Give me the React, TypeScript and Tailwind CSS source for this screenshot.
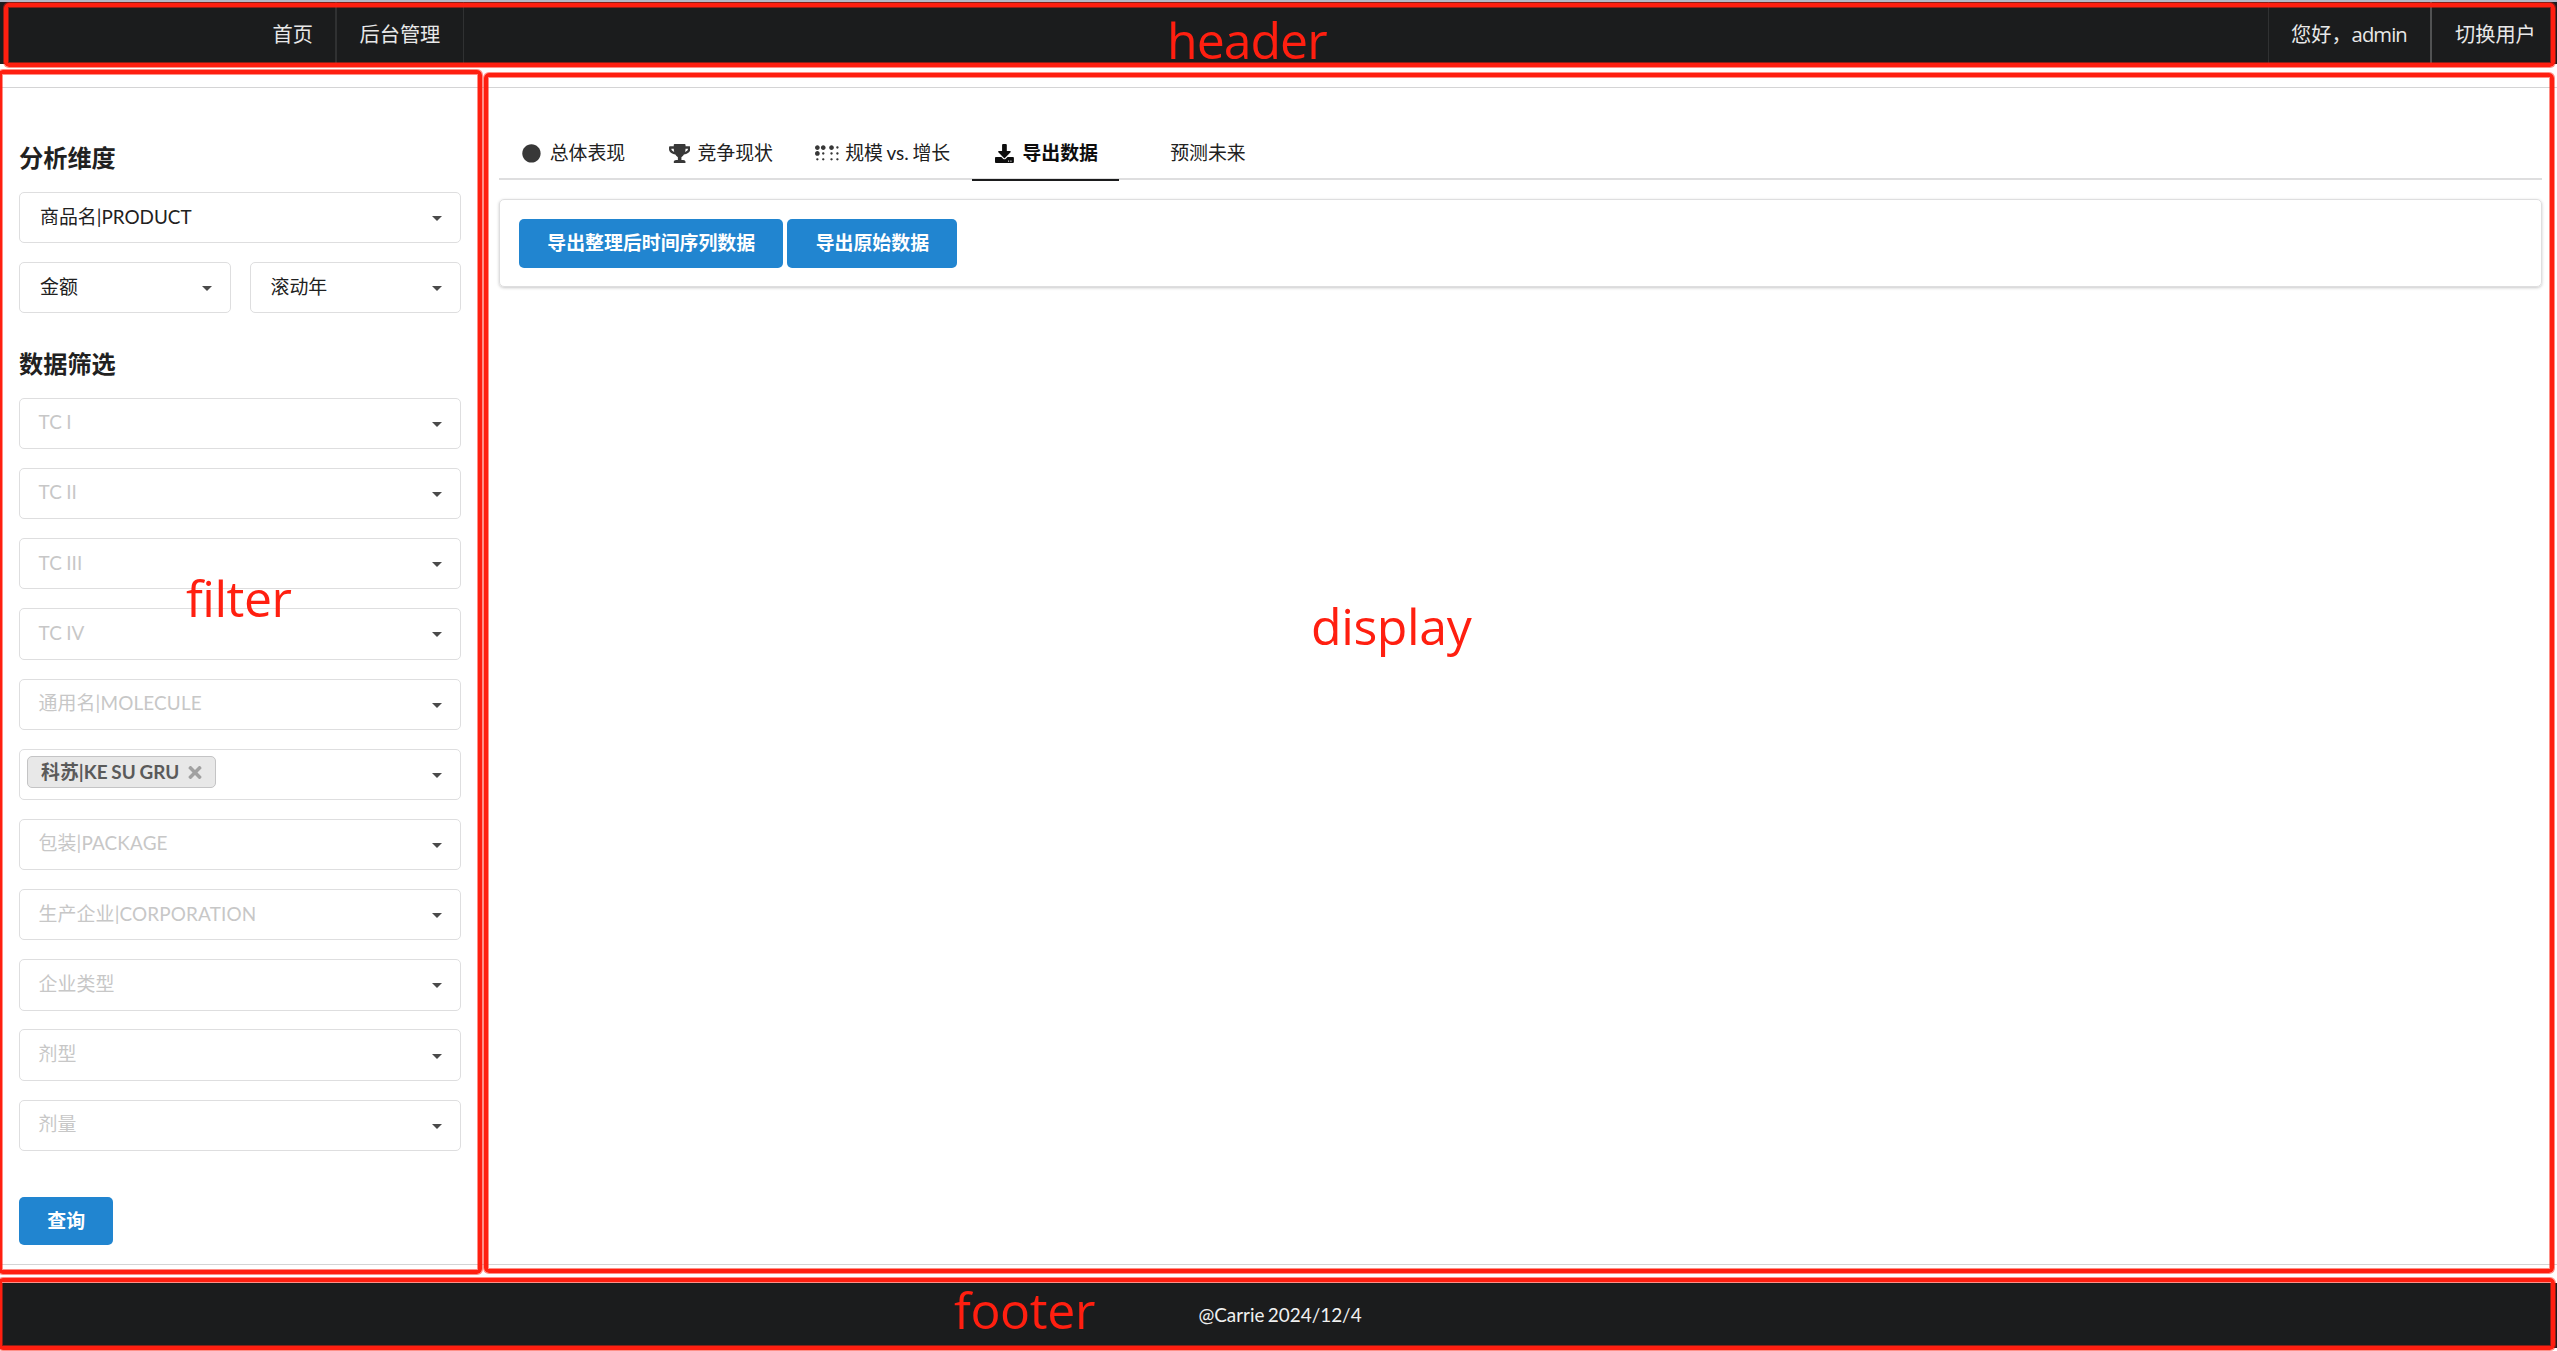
import React from "react";
import { FaBraille, FaCircle, FaDownload, FaTimes, FaTrophy } from "react-icons/fa";

function Caret() {
  return (
    <svg className="mt-[2px] h-[5px] w-[10px] shrink-0" viewBox="0 0 10 5">
      <path d="M0 0H10L5 5Z" fill="#4a4a4a" />
    </svg>
  );
}

function Field({ value, placeholder, tag }: { value?: string; placeholder?: string; tag?: string }) {
  return (
    <div className="flex h-[51.3px] min-w-0 flex-1 items-center justify-between rounded-[5px] border border-[#dededf] bg-white pr-[18px]">
      {tag ? (
        <span className="mb-[4px] ml-[7px] flex h-8 items-center gap-[9px] rounded-[5px] border border-[#c4c4c5] bg-[#e8e8e8] pr-[13px] pl-[13px] font-bold text-[#5a5a5a]">
          <span className="leading-none [word-spacing:-0.8px]">{tag}</span>
          <FaTimes className="h-[19px] w-[14px] text-[#a1a1a1]" />
        </span>
      ) : value ? (
        <span className="ml-5 leading-none text-[#212121]">{value}</span>
      ) : (
        <span className="mb-[1.5px] ml-[18.5px] leading-none tracking-[0.15px] text-[#c7c7c7] [word-spacing:-0.8px]">
          {placeholder}
        </span>
      )}
      <Caret />
    </div>
  );
}

function Tab({ icon, label, active }: { icon?: React.ReactNode; label: string; active?: boolean }) {
  return (
    <div
      className={
        active
          ? "-mb-[3px] flex h-[60px] items-center border-b-2 border-[#1b1c1d] px-[21.55px] pt-[7px] font-bold text-[#0d0d0d]"
          : "flex h-[57px] items-center px-[21.55px] pt-[8px] text-[#212121]"
      }
    >
      <span className="mr-[6.8px] flex w-[22.3px] shrink-0 justify-center">{icon}</span>
      <span className="leading-none whitespace-nowrap [word-spacing:-1.2px]">{label}</span>
    </div>
  );
}

function PrimaryButton({ children }: { children: React.ReactNode }) {
  return (
    <button className="flex h-[48.6px] items-center rounded-[5px] bg-[#2185d0] px-[28.3px] pt-px leading-none font-bold whitespace-nowrap text-white">
      {children}
    </button>
  );
}

const filters = [
  { placeholder: "TC I" },
  { placeholder: "TC II" },
  { placeholder: "TC III" },
  { placeholder: "TC IV" },
  { placeholder: "通用名|MOLECULE" },
  { tag: "科苏|KE SU GRU" },
  { placeholder: "包装|PACKAGE" },
  { placeholder: "生产企业|CORPORATION" },
  { placeholder: "企业类型" },
  { placeholder: "剂型" },
  { placeholder: "剂量" },
];

const regions = [
  "top-[3px] left-[4px] h-[64px] w-[2551px]",
  "top-[70px] left-[-2px] h-[1204px] w-[484px]",
  "top-[73px] left-[484px] h-[1200px] w-[2070px]",
  "top-[1278px] left-[-2px] h-[72px] w-[2557px]",
];

export default function App() {
  return (
    <div className="relative flex h-[1351px] w-[2557px] flex-col overflow-hidden bg-white font-[Lato,'Noto_Sans_CJK_SC',sans-serif] text-[18.9px]">
      <header className="flex h-16 shrink-0 items-stretch border-t-2 border-[#b3b7c6] bg-[#1b1c1d] pl-[249px] font-['Open_Sans','Noto_Sans_CJK_SC',sans-serif] text-[20.2px] leading-none text-[#e8e8e8]">
        <a className="flex w-[88px] items-center border-r-2 border-[#303132] pt-[2px] pl-[23.5px]">首页</a>
        <a className="flex w-[127px] items-center border-r border-[#303132] pt-[2px] pl-[22.5px]">后台管理</a>
        <div className="flex-1" />
        <span className="flex w-[164px] items-center border-r-2 border-l border-r-[#515253] border-l-[#303132] pt-[2px] pl-[22px] whitespace-nowrap">
          您好，<span className="tracking-[-0.9px]">admin</span>
        </span>
        <a className="flex w-[125px] items-center pt-[2px] pl-[23px]">切换用户</a>
      </header>

      <div className="mt-[23px] flex h-[1178px] shrink-0 border-y border-[#d4d4d5]">
        <aside className="flex w-[480px] shrink-0 flex-col pt-[56px] pr-[19px] pl-[19px]">
          <h2 className="flex h-[28px] items-center text-[24.2px] leading-none font-bold text-[#212121]">分析维度</h2>
          <div className="mt-[20px] flex">
            <Field value="商品名|PRODUCT" />
          </div>
          <div className="mt-[18.9px] flex gap-[19px]">
            <Field value="金额" />
            <Field value="滚动年" />
          </div>
          <h2 className="mt-[37px] flex h-[28px] items-center text-[24.2px] leading-none font-bold text-[#212121]">
            数据筛选
          </h2>
          <div className="mt-[19.3px] flex flex-col gap-[18.9px]">
            {filters.map((f, i) => (
              <div className="flex" key={i}>
                <Field {...f} />
              </div>
            ))}
          </div>
          <div className="mt-[45.6px] flex">
            <PrimaryButton>查询</PrimaryButton>
          </div>
        </aside>

        <main className="flex min-w-0 flex-1 flex-col pt-[33px] pr-[15px] pl-[19px]">
          <nav className="flex h-[59px] items-start border-b-2 border-[#dededf]">
            <Tab icon={<FaCircle className="size-[18.9px] shrink-0 text-[#383838]" />} label="总体表现" />
            <Tab icon={<FaTrophy className="h-[18.9px] w-[21.3px] shrink-0 text-[#383838]" />} label="竞争现状" />
            <Tab icon={<FaBraille className="h-[18.9px] w-[23.6px] shrink-0 text-[#383838]" />} label="规模 vs. 增长" />
            <Tab active icon={<FaDownload className="size-[18.9px] shrink-0 text-[#0d0d0d]" />} label="导出数据" />
            <Tab label="预测未来" />
          </nav>
          <section className="mt-[19px] flex h-[88px] gap-1 rounded-[5px] border border-[#dededf] px-[19px] pt-[19px] shadow-[0_1px_3px_0_#22242640]">
            <PrimaryButton>导出整理后时间序列数据</PrimaryButton>
            <PrimaryButton>导出原始数据</PrimaryButton>
          </section>
        </main>
      </div>

      <footer className="mt-[18px] flex h-[65px] shrink-0 items-center justify-center bg-[#1b1c1d] pl-[3px] text-[#f0f0f0]">
        <span className="leading-none [word-spacing:-1.5px]">@Carrie 2024/12/4</span>
      </footer>

      {/* Region annotations drawn over the page */}
      <div className="pointer-events-none absolute inset-0 font-['Open_Sans',sans-serif] text-[50px] leading-none text-[#ff1f10]">
        {regions.map((r) => (
          <div
            key={r}
            className={`absolute rounded-[5px] border-4 border-[#ff1f10] shadow-[0_0_0_1px_#ff1f1080,inset_0_0_0_1px_#ff1f1080] ${r}`}
          />
        ))}
        <span className="absolute top-[15px] left-[1167px] tracking-[-1px]">header</span>
        <span className="absolute top-[573px] left-[186px] tracking-[-0.5px]">filter</span>
        <span className="absolute top-[601px] left-[1311px] tracking-[-0.4px]">display</span>
        <span className="absolute top-[1285px] left-[954px] tracking-[-0.4px]">footer</span>
      </div>
    </div>
  );
}
